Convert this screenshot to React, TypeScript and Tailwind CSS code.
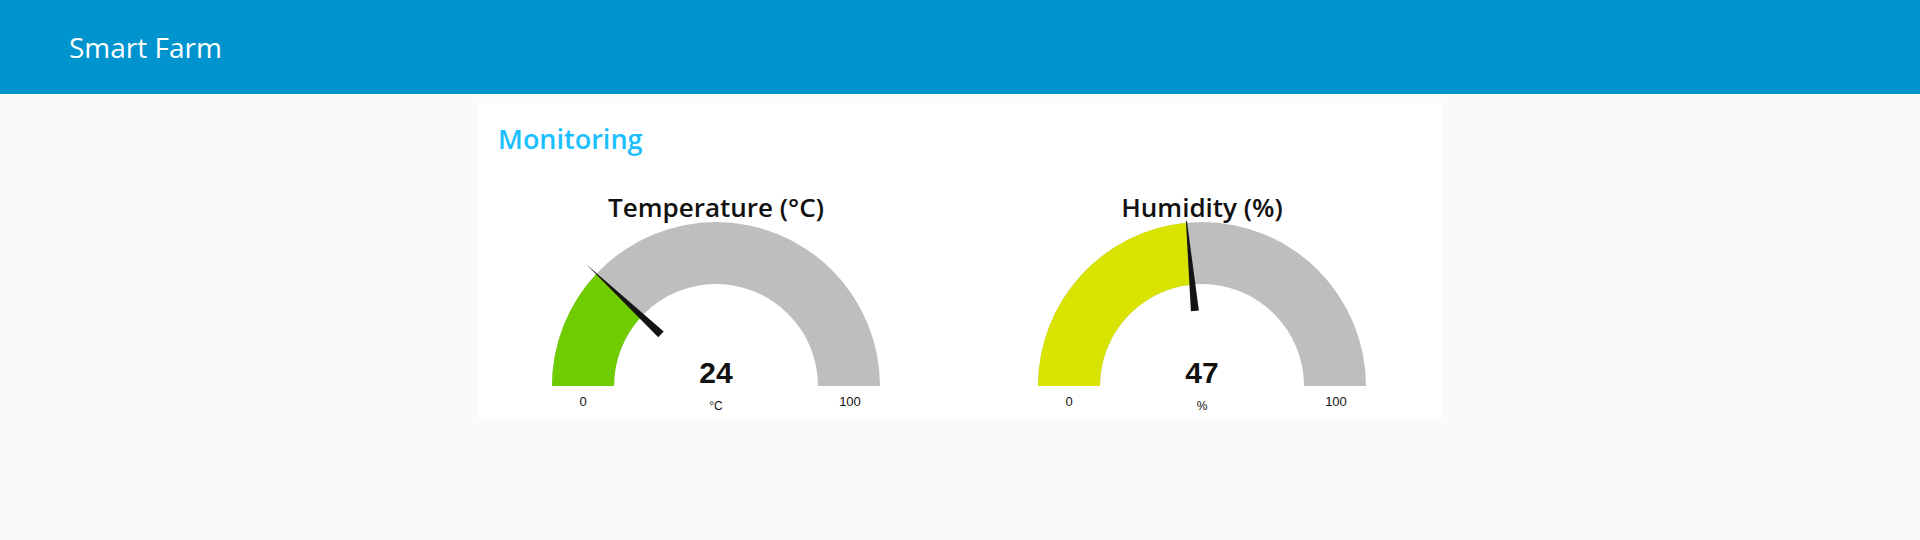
import React from 'react';

type GaugeProps = {
  title: string;
  value: number;
  unit: string;
  color: string;
};

const CX = 180;
const CY = 165;
const R_OUT = 164;
const R_IN = 102;

const pt = (r: number, a: number) => [CX + r * Math.cos(a), CY - r * Math.sin(a)];

const Gauge: React.FC<GaugeProps> = ({ title, value, unit, color }) => {
  const a = Math.PI * (1 - value / 100);
  const [ox, oy] = pt(R_OUT, a);
  const [ix, iy] = pt(R_IN, a);

  // needle: flat base near the centre, sharp tip past the outer edge
  const [bx, by] = pt(75.5, a);
  const [tx, ty] = pt(178, a);
  const nx = Math.sin(a) * 4;
  const ny = Math.cos(a) * 4;

  return (
    <div className="flex flex-col items-center">
      <div className="text-[26px] leading-[28px] font-semibold text-[#111] font-['Open_Sans',sans-serif]">
        {title}
      </div>
      <svg width="360" height="197" viewBox="0 0 360 197" className="block">
        <path
          d={`M ${CX - R_OUT} ${CY} A ${R_OUT} ${R_OUT} 0 0 1 ${CX + R_OUT} ${CY} L ${CX + R_IN} ${CY} A ${R_IN} ${R_IN} 0 0 0 ${CX - R_IN} ${CY} Z`}
          fill="#bebebe"
        />
        <path
          d={`M ${CX - R_OUT} ${CY} A ${R_OUT} ${R_OUT} 0 0 1 ${ox} ${oy} L ${ix} ${iy} A ${R_IN} ${R_IN} 0 0 0 ${CX - R_IN} ${CY} Z`}
          fill={color}
        />
        <polygon points={`${bx + nx},${by + ny} ${bx - nx},${by - ny} ${tx},${ty}`} fill="#141414" />
        <text x={CX} y={162} textAnchor="middle" fontFamily="'Liberation Sans', Arial, sans-serif" fontWeight="bold" fontSize="30" fill="#111">
          {value}
        </text>
        <text x={CX - 133} y={185} textAnchor="middle" fontFamily="'Liberation Sans', Arial, sans-serif" fontSize="13" fill="#111">
          0
        </text>
        <text x={CX + 134} y={185} textAnchor="middle" fontFamily="'Liberation Sans', Arial, sans-serif" fontSize="13" fill="#111">
          100
        </text>
        <text x={CX} y={189} textAnchor="middle" fontFamily="'Liberation Sans', Arial, sans-serif" fontSize="12" fill="#111">
          {unit}
        </text>
      </svg>
    </div>
  );
};

const App: React.FC = () => {
  return (
    <div className="min-h-screen bg-[#fafafa] font-['Open_Sans',sans-serif]">
      {/* Toolbar */}
      <header className="h-[94px] bg-[#0094ce] flex items-center pl-[69px]">
        <h1 className="text-[28px] text-white leading-none">Smart Farm</h1>
      </header>

      {/* Dashboard group */}
      <main className="flex justify-center pt-[9px]">
        <section className="w-[964px] h-[316px] bg-white">
          <h2 className="pl-[20px] pt-[18px] text-[27px] leading-[36px] text-[#1bbfff] font-semibold">
            Monitoring
          </h2>
          <div className="grid grid-cols-[476px_476px] gap-x-[10px] mt-[36px]">
            <Gauge title="Temperature (°C)" value={24} unit="°C" color="#6ecc00" />
            <Gauge title="Humidity (%)" value={47} unit="%" color="#d8e300" />
          </div>
        </section>
      </main>
    </div>
  );
};

export default App;
